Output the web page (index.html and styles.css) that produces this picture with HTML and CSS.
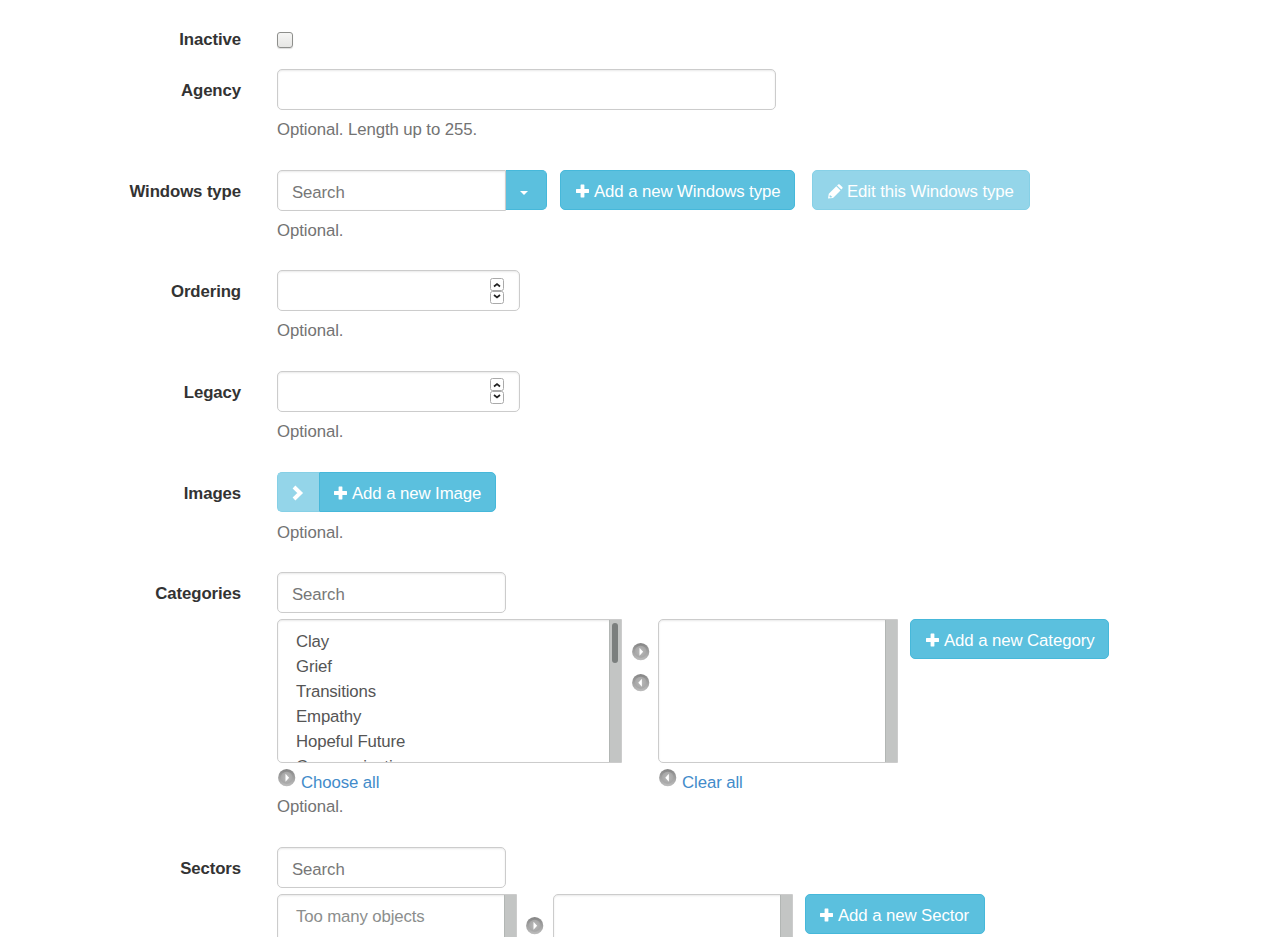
FILE: index.html
```html
<!DOCTYPE html>
<html lang="en">
<head>
<meta charset="utf-8">
<title>Windows form</title>
<link rel="stylesheet" href="styles.css">
</head>
<body>
<svg class="defs" width="0" height="0" aria-hidden="true">
  <defs>
    <linearGradient id="disc" x1="0" y1="0" x2="0" y2="1"><stop offset="0" stop-color="#858585"/><stop offset="1" stop-color="#bdbdbd"/></linearGradient>
    <radialGradient id="face"><stop offset="0" stop-color="#bababa"/><stop offset="1" stop-color="#a6a6a6"/></radialGradient>
  </defs>
  <symbol id="plus" viewBox="0 0 14 14"><path d="M5 .5h3q.4 0 .4.4V5h4.200q.4 0 .4.4v3.200q0 .4-.4.4H8.400v4.100q0 .4-.4.4H5q-.4 0-.4-.4V9H.4Q0 9 0 8.600V5.400Q0 5 .4 5h4.200V.9q0-.4.4-.4z" fill="currentColor"/></symbol>
  <symbol id="pencil" viewBox="0 0 15 15"><path fill="currentColor" fill-rule="evenodd" d="M0 14.500.8 9.800 8.300 2.300l4.200 4.200L5 14zM1.900 11l-.4 1.900 1 .6 1.900-.5zM9.100 1.500l1-1q.8-.7 1.600 0l2.600 2.600q.6.700 0 1.500l-1 1z"/></symbol>
  <symbol id="chevron" viewBox="0 0 12 16"><path d="M2 2l6.200 6L2 14" fill="none" stroke="currentColor" stroke-width="4"/></symbol>
  <symbol id="move" viewBox="0 0 18 18"><circle cx="8.700" cy="8.700" r="8.600" fill="url(#disc)"/><circle cx="8.700" cy="8.700" r="6" fill="url(#face)"/><path d="M7.500 4.800v8l3.600-4z" fill="#fff"/></symbol>
  <symbol id="move-back" viewBox="0 0 18 18"><circle cx="8.700" cy="8.700" r="8.600" fill="url(#disc)"/><circle cx="8.700" cy="8.700" r="6" fill="url(#face)"/><path d="M9.900 4.800v8l-3.600-4z" fill="#fff"/></symbol>
</svg>
<form class="form">
  <div class="row row-check">
    <label class="label">Inactive</label>
    <div class="field"><span class="check"></span></div>
  </div>
  <div class="row">
    <label class="label">Agency</label>
    <div class="field"><div class="input input-wide"></div><p class="help">Optional. Length up to 255.</p></div>
  </div>
  <div class="row row-short">
    <label class="label">Windows type</label>
    <div class="field">
      <div class="line">
        <div class="input input-joined"><span>Search</span></div>
        <div class="btn btn-caret"><i class="caret"></i></div>
        <div class="btn btn-add-type"><svg class="ico"><use href="#plus"/></svg><span>Add a new Windows type</span></div>
        <div class="btn btn-edit muted"><svg class="ico ico-pencil"><use href="#pencil"/></svg><span>Edit this Windows type</span></div>
      </div>
      <p class="help">Optional.</p>
    </div>
  </div>
  <div class="row">
    <label class="label">Ordering</label>
    <div class="field">
      <div class="input input-number"><svg class="spin" viewBox="0 0 14 26"><g fill="#fff" stroke="#aaa"><rect x=".5" y=".5" width="13" height="12" rx="2"/><rect x=".5" y="13.500" width="13" height="12" rx="2"/></g><path d="M4 8.500 7 6l3 2.500M4 17 7 19.500 10 17" fill="none" stroke="#222" stroke-width="1.700"/></svg></div>
      <p class="help">Optional.</p>
    </div>
  </div>
  <div class="row">
    <label class="label">Legacy</label>
    <div class="field">
      <div class="input input-number input-legacy"><svg class="spin" viewBox="0 0 14 26"><g fill="#fff" stroke="#aaa"><rect x=".5" y=".5" width="13" height="12" rx="2"/><rect x=".5" y="13.500" width="13" height="12" rx="2"/></g><path d="M4 8.500 7 6l3 2.500M4 17 7 19.500 10 17" fill="none" stroke="#222" stroke-width="1.700"/></svg></div>
      <p class="help">Optional.</p>
    </div>
  </div>
  <div class="row row-short">
    <label class="label">Images</label>
    <div class="field">
      <div class="line">
        <div class="btn btn-open muted"><svg class="ico-chevron"><use href="#chevron"/></svg></div>
        <div class="btn btn-add-image"><svg class="ico"><use href="#plus"/></svg><span>Add a new Image</span></div>
      </div>
      <p class="help">Optional.</p>
    </div>
  </div>
  <div class="row row-tall">
    <label class="label">Categories</label>
    <div class="field">
      <div class="input input-search"><span>Search</span></div>
      <div class="selector">
        <div class="list list-wide"><div class="options"><span>Clay</span><span>Grief</span><span>Transitions</span><span>Empathy</span><span>Hopeful Future</span><span>Communication</span></div><div class="bar"><div class="thumb"></div></div></div>
        <div class="moves"><svg class="move"><use href="#move"/></svg><svg class="move"><use href="#move-back"/></svg></div>
        <div class="list"><div class="options"></div><div class="bar"></div></div>
        <div class="btn btn-category"><svg class="ico"><use href="#plus"/></svg><span>Add a new Category</span></div>
      </div>
      <div class="links">
        <a class="link link-choose"><svg class="move"><use href="#move"/></svg><span>Choose all</span></a>
        <a class="link"><svg class="move"><use href="#move-back"/></svg><span>Clear all</span></a>
      </div>
      <p class="help help-tight">Optional.</p>
    </div>
  </div>
  <div class="row row-last">
    <label class="label">Sectors</label>
    <div class="field">
      <div class="input input-search"><span>Search</span></div>
      <div class="selector">
        <div class="list"><div class="options empty"><span>Too many objects</span></div><div class="bar"></div></div>
        <div class="moves moves-sector"><svg class="move"><use href="#move"/></svg><svg class="move"><use href="#move-back"/></svg></div>
        <div class="list"><div class="options"></div><div class="bar"></div></div>
        <div class="btn btn-sector"><svg class="ico"><use href="#plus"/></svg><span>Add a new Sector</span></div>
      </div>
    </div>
  </div>
</form>
</body>
</html>
```

FILE: styles.css
```css
* { box-sizing: border-box; }
body {
  margin: 0;
  height: 937px;
  overflow: hidden;
  background: #fff;
  color: #333;
  font: 16.8px/24px "Liberation Sans", Arial, sans-serif;
  letter-spacing: -0.09px;
  white-space: nowrap;
}
svg { display: block; flex: none; }
.defs { position: absolute; }
.form { padding-top: 18px; height: 937px; overflow: hidden; }
.row { display: grid; grid-template-columns: 241px 1fr; column-gap: 36px; height: 101px; }
.row-check { height: 51px; }
.row-short { height: 100px; }
.row-tall { height: 275px; }
.row-last { height: 200px; }
.label { padding-top: 10px; font-weight: bold; text-align: right; letter-spacing: -0.1px; }
.field { min-width: 0; }
.check {
  display: block;
  width: 16px;
  height: 16px;
  margin-top: 14px;
  border: 1px solid #8e8f8c;
  border-radius: 3px;
  background: linear-gradient(#f6f6f5, #e6e6e4);
  box-shadow: 0 1px 1px #ddd;
}
.line { display: flex; height: 41px; align-items: flex-start; }
.input {
  display: flex;
  align-items: center;
  height: 41px;
  padding: 4px 14px 0;
  border: 1px solid #ccc;
  border-radius: 5px;
  background: #fff;
  box-shadow: inset 0 1px 2px rgba(0, 0, 0, .09);
  color: #777;
}
.input-wide { width: 499px; }
.input-joined { width: 229px; border-radius: 5px 0 0 5px; }
.input-search { width: 229px; }
.input-number { width: 243px; padding: 1px 15px 0; justify-content: flex-end; }
.input-legacy { padding-top: 0; padding-bottom: 1px; }
.spin { width: 14px; height: 26px; }
.help { margin: 8px 0 0; color: #737373; }
.btn {
  display: flex;
  flex: none;
  align-items: center;
  gap: 4px;
  height: 40px;
  padding: 4px 0 0 15px;
  border: 1px solid #46b8da;
  border-radius: 5px;
  background: #5bc0de;
  color: #fff;
}
.muted { opacity: .65; }
.ico { width: 14px; height: 14px; margin-top: -2px; }
.ico-pencil { width: 15px; height: 15px; margin-top: -2px; }
.btn-caret { width: 41px; padding: 5px 0 0 13px; border-left: 0; border-radius: 0 5px 5px 0; }
.caret { border: 4px solid transparent; border-top-color: #fff; border-bottom: 0; margin-left: 1px; }
.btn-add-type { width: 235px; margin-left: 13px; }
.btn-edit { width: 218px; margin-left: 17px; }
.btn-open { width: 42px; padding: 1px 0 0 14px; border-right: 0; border-radius: 5px 0 0 5px; }
.ico-chevron { width: 12px; height: 16px; }
.btn-add-image { width: 177px; padding-left: 14px; border-radius: 0 5px 5px 0; }
.btn-category { width: 199px; margin-left: 12px; }
.btn-sector { width: 180px; margin-left: 12px; padding-left: 14px; }
.selector { display: flex; align-items: flex-start; margin-top: 6px; height: 144px; }
.list {
  display: flex;
  flex: none;
  width: 240px;
  height: 144px;
  border: 1px solid #ccc;
  border-radius: 5px 0 0 5px;
  overflow: hidden;
  box-shadow: inset 0 1px 2px rgba(0, 0, 0, .09);
}
.list-wide { width: 345px; }
.options { flex: 1; padding: 9px 0 0 18px; color: #555; overflow: hidden; letter-spacing: -0.13px; }
.options span { display: block; height: 25px; line-height: 25px; }
.options.empty { color: #8b8e8d; }
.bar { flex: none; width: 12px; padding: 3px 3px 0 2px; border-left: 1px solid #b2b6b4; background: #c3c5c4; }
.thumb { width: 6px; height: 40px; border-radius: 3px; background: #7b7f7e; }
.moves { flex: none; width: 36px; padding: 24px 0 0 10px; }
.moves-sector { padding: 23px 0 0 9px; }
.move { width: 18px; height: 18px; }
.moves .move + .move { margin-top: 13px; }
.links { display: flex; height: 31px; padding-top: 6px; }
.link { display: flex; gap: 5px; padding-left: 1px; color: #428bca; }
.link span { padding-top: 2px; }
.link-choose { width: 381px; }
.help-tight { margin-top: 1px; }
```
